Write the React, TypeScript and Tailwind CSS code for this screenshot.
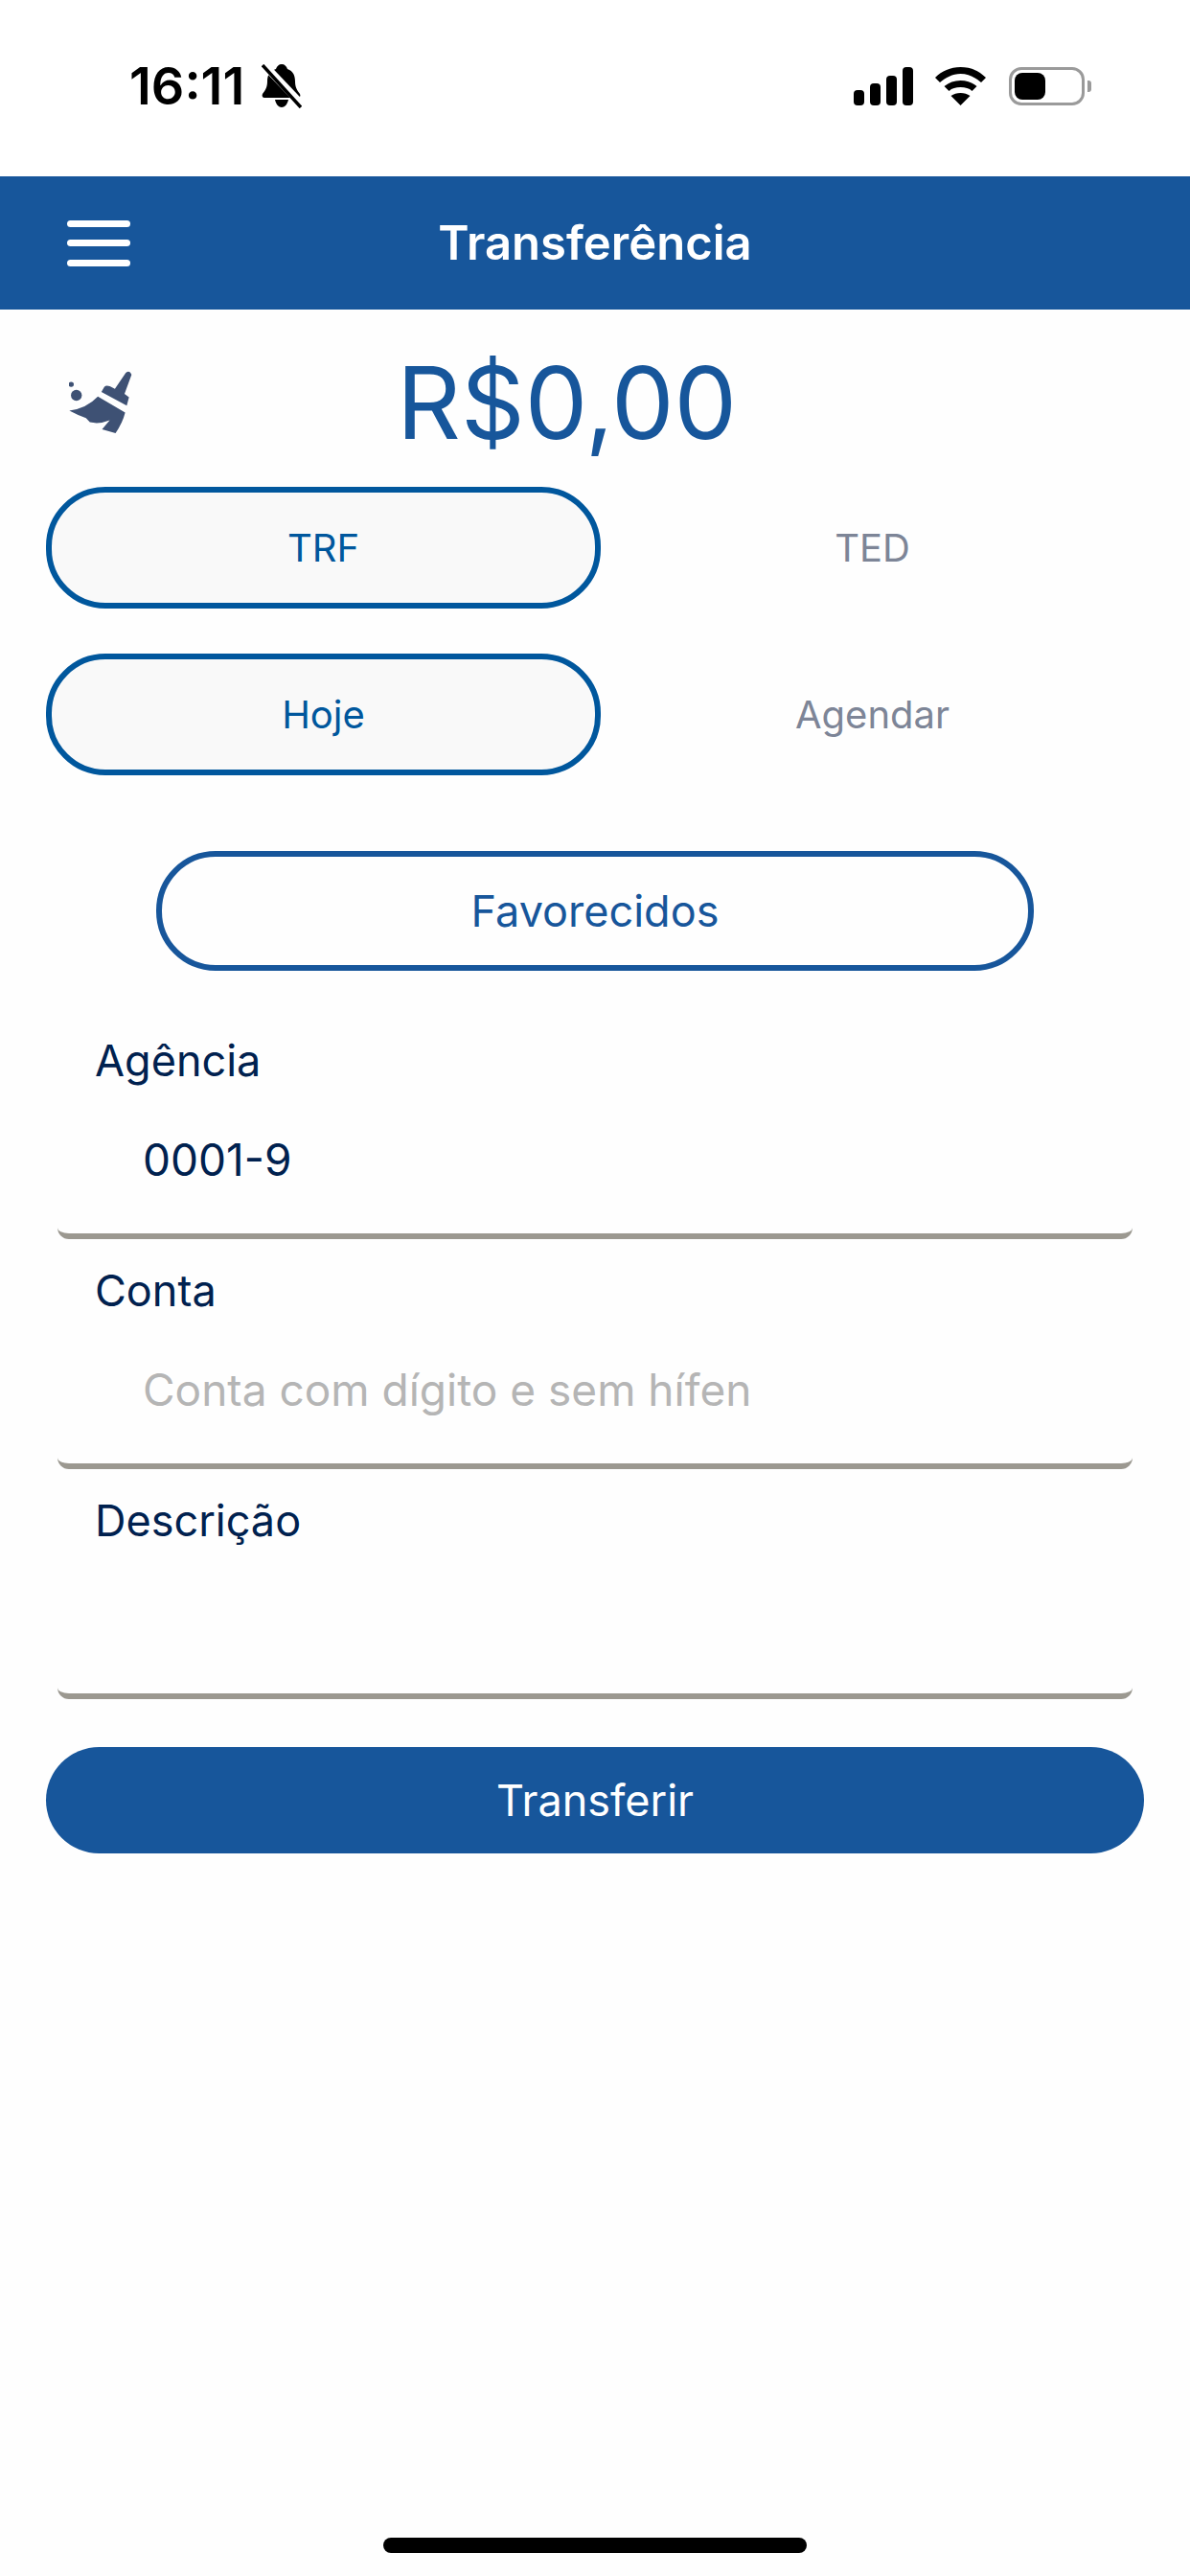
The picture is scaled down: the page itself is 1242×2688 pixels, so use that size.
import React from 'react';

const Field = ({ label, value, placeholder }: { label: string; value?: string; placeholder?: string }) => (
  <div className="h-[240px] flex flex-col">
    <label className="pl-[99px] h-[54px] mt-[6px] flex items-center text-[45px] text-[#00214f]">{label}</label>
    <div className="mx-[60px] h-[159px] border-b-[6px] border-[#9b9890] rounded-b-[12px] flex items-center">
      <input
        readOnly
        defaultValue={value}
        placeholder={placeholder}
        className="w-full pl-[89px] bg-transparent outline-none text-[46px] text-[#00214f] placeholder:text-[#b5b5b5]"
      />
    </div>
  </div>
);

const Segment = ({ left, right }: { left: string; right: string }) => (
  <div className="flex px-[48px]">
    <button className="w-[579px] h-[127px] rounded-[62px] border-[6px] border-[#00579d] bg-[#f9f9f9] text-[40px] text-[#00579d]">
      {left}
    </button>
    <button className="flex-1 h-[127px] rounded-[62px] text-[40px] text-[#7d8597]">{right}</button>
  </div>
);

export default function App() {
  return (
    <div className="w-[1242px] h-[2688px] flex flex-col bg-[#fefefe] font-['Inter',sans-serif]">
      {/* Status bar */}
      <div className="h-[184px] shrink-0 bg-white flex items-start justify-between pt-[60px] pl-[135px] pr-[103px]">
        <div className="flex items-center gap-[18px] h-[60px]">
          <span className="text-[54px] font-semibold text-black leading-none">16:11</span>
          <svg width="42" height="46" viewBox="0 0 42 46" fill="none">
            <path d="M21 0c3 0 5 2 6 5 6 2 8 7 8 13 0 6 2 9 5 13 1 2 0 4-2 4H3c-2 0-3-2-2-4 3-4 5-7 5-13 0-6 2-11 9-13 1-3 3-5 6-5zM14 37h14c-1 5-4 8-7 8s-6-3-7-8z" fill="#000" />
            <path d="M2 0l40 42" stroke="#fff" strokeWidth="8" />
            <path d="M1 1l40 44" stroke="#000" strokeWidth="3.5" />
          </svg>
        </div>
        <div className="flex items-center h-[60px]">
          <svg width="62" height="40" viewBox="0 0 62 40" fill="#000">
            <rect x="0" y="24" width="11" height="16" rx="4" />
            <rect x="17" y="17" width="11" height="23" rx="4" />
            <rect x="34" y="9" width="11" height="31" rx="4" />
            <rect x="51" y="0" width="11" height="40" rx="4" />
          </svg>
          <svg className="ml-[23px]" width="53" height="40" viewBox="0 0 53 40" fill="#000">
            <path d="M26.5 0C37 0 46 4 53 11l-5 5C42 11 35 7 26.5 7S11 11 5 16l-5-5C7 4 16 0 26.5 0z" />
            <path d="M26.5 14c6.500 0 12 2 17 6l-5 5c-3-3-7-4-12-4s-9 1-12 4l-5-5c5-4 10.500-6 17-6z" />
            <path d="M26.500 40l-10-10c3-2 6-3 10-3s7 1 10 3z" />
          </svg>
          <div className="ml-[24px] w-[79px] h-[40px] rounded-[13px] border-[3px] border-[#9a9a9a] p-[3px] flex">
            <div className="w-[32px] h-full rounded-[8px] bg-black" />
          </div>
          <div className="ml-[3px] w-[4px] h-[12px] rounded-r-[3px] bg-[#9a9a9a]" />
        </div>
      </div>

      {/* Header */}
      <header className="h-[139px] shrink-0 bg-[#17569b] flex items-center relative">
        <div className="ml-[70px] w-[66px] flex flex-col gap-[13.5px]">
          <div className="h-[7px] rounded-full bg-white" />
          <div className="h-[7px] rounded-full bg-white" />
          <div className="h-[7px] rounded-full bg-white" />
        </div>
        <h1 className="absolute inset-x-0 text-center text-[49px] font-semibold text-white">Transferência</h1>
      </header>

      {/* Amount */}
      <div className="h-[185px] shrink-0 flex items-center pl-[72px] pt-[8px]">
        <svg width="66" height="66" viewBox="95 78 197 197" fill="#3e5174">
          <circle cx="102" cy="120" r="8" />
          <circle cx="118" cy="154" r="17" />
          <path d="M272 84Q284 74 290 90L268 150L282 160L275 186L196 144L205 128Q210 122 222 126L238 134Z" />
          <path d="M185 158L270 208Q262 240 240 272L198 260L222 232Q190 245 160 238L148 225Q120 215 96 202Q150 195 185 158Z" />
        </svg>
        <div className="ml-[276px] text-[104px] leading-none text-[#17569b]">R$0,00</div>
      </div>

      {/* Type and date selectors */}
      <div className="flex flex-col gap-[47px]">
        <Segment left="TRF" right="TED" />
        <Segment left="Hoje" right="Agendar" />
      </div>

      <div className="mt-[79px] flex justify-center">
        <button className="w-[916px] h-[125px] rounded-[62px] border-[6px] border-[#17569b] text-[45px] text-[#17569b]">
          Favorecidos
        </button>
      </div>

      {/* Form */}
      <div className="mt-[61px] flex flex-col">
        <Field label="Agência" value="0001-9" />
        <Field label="Conta" placeholder="Conta com dígito e sem hífen" />
        <Field label="Descrição" />
      </div>

      <div className="mt-[29px] px-[48px]">
        <button className="w-full h-[111px] rounded-[56px] bg-[#17569b] text-[45px] text-white">Transferir</button>
      </div>

      {/* Home indicator */}
      <div className="mt-auto mb-[24px] self-center w-[442px] h-[16px] rounded-full bg-black" />
    </div>
  );
}
